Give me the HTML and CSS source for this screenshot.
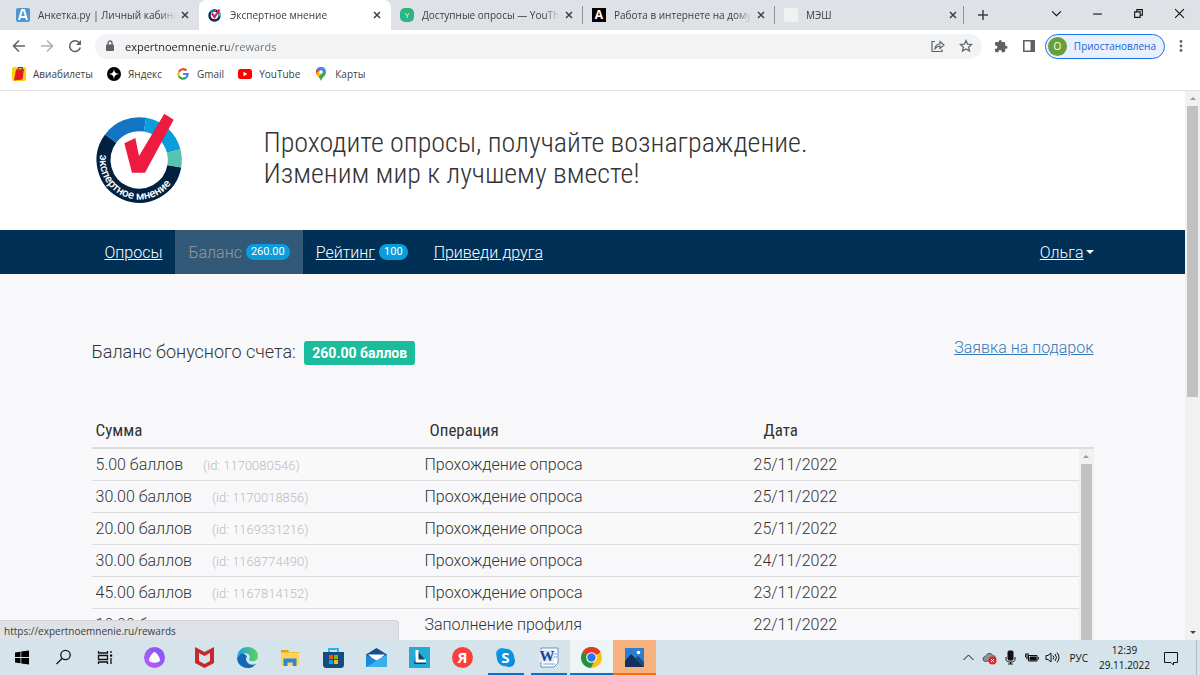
FILE: index.html
```html
<!DOCTYPE html>
<html lang="ru">

<head>
    <meta charset="UTF-8">
    <meta name="viewport" content="width=device-width, initial-scale=1.0">
    <title>Экспертное мнение</title>
    <link rel="stylesheet" href="styles.css">
</head>

<body>

    <!-- tabs -->
    <div class="tabstrip">
        <div class="tab">
            <svg class="favicon" viewBox="0 0 14 14"><rect width="14" height="14" rx="2" fill="#4f97d3"/><path d="M3 12 6 2h2l3 10M4.500 9h5" fill="none" stroke="#fff" stroke-width="2"/></svg>
            <span class="tab-title">Анкетка.ру | Личный кабинет</span>
            <button class="tab-close" aria-label="Закрыть"><svg viewBox="0 0 10 10"><path d="M2 2l6 6M8 2L2 8"/></svg></button>
        </div>
        <div class="tab active">
            <svg class="favicon" viewBox="0 0 14 14"><circle cx="6.500" cy="7.500" r="5" fill="none" stroke="#0c2a4d" stroke-width="2.400"/><path d="M2.500 4.500A5 5 0 0 1 8 2.700" fill="none" stroke="#1a78c2" stroke-width="2.400"/><path d="M11 5a5 5 0 0 1 .500 3.500" fill="none" stroke="#37b9d6" stroke-width="2.400"/><path d="M4 5.500 6.500 9 11.500 1.500" fill="none" stroke="#ed1b40" stroke-width="2.200"/></svg>
            <span class="tab-title">Экспертное мнение</span>
            <button class="tab-close" aria-label="Закрыть"><svg viewBox="0 0 10 10"><path d="M2 2l6 6M8 2L2 8"/></svg></button>
        </div>
        <div class="tab">
            <span class="favicon letter green">Y</span>
            <span class="tab-title">Доступные опросы — YouThink</span>
            <button class="tab-close" aria-label="Закрыть"><svg viewBox="0 0 10 10"><path d="M2 2l6 6M8 2L2 8"/></svg></button>
        </div>
        <div class="tab divided">
            <span class="favicon letter black">A</span>
            <span class="tab-title">Работа в интернете на дому</span>
            <button class="tab-close" aria-label="Закрыть"><svg viewBox="0 0 10 10"><path d="M2 2l6 6M8 2L2 8"/></svg></button>
        </div>
        <div class="tab divided last">
            <span class="favicon blank"></span>
            <span class="tab-title">МЭШ</span>
            <button class="tab-close" aria-label="Закрыть"><svg viewBox="0 0 10 10"><path d="M2 2l6 6M8 2L2 8"/></svg></button>
        </div>
        <button class="new-tab" aria-label="Новая вкладка"><svg viewBox="0 0 12 12"><path d="M6 1v10M1 6h10"/></svg></button>
        <div class="window-buttons">
            <button aria-label="Поиск вкладок"><svg viewBox="0 0 10 10"><path d="M1 3l4 4 4-4"/></svg></button>
            <button aria-label="Свернуть"><svg viewBox="0 0 10 10"><path d="M1 5.500h8"/></svg></button>
            <button aria-label="Окно"><svg viewBox="0 0 10 10"><path d="M1.500 3.500h5v5h-5zM3.500 3V1.500h5v5H7"/></svg></button>
            <button aria-label="Закрыть окно"><svg viewBox="0 0 10 10"><path d="M1 1l8 8M9 1L1 9"/></svg></button>
        </div>
    </div>

    <!-- address bar -->
    <div class="toolbar">
        <button class="tool" aria-label="Назад"><svg viewBox="0 0 14 14"><path d="M13 7H2M7 1.500 1.500 7 7 12.500"/></svg></button>
        <button class="tool muted" aria-label="Вперёд"><svg viewBox="0 0 14 14"><path d="M1 7h11M7 1.500 12.500 7 7 12.500"/></svg></button>
        <button class="tool" aria-label="Обновить"><svg viewBox="0 0 14 14"><path d="M11.500 4A5.400 5.400 0 1 0 12.300 8.500"/><path d="M13 1v5H8z" class="solid"/></svg></button>
        <div class="omnibox">
            <svg class="lock" viewBox="0 0 10 12"><rect x="1" y="4.500" width="8" height="6.500" rx="1" fill="#5f6368"/><path d="M3 5V3a2 2 0 0 1 4 0v2" fill="none" stroke="#5f6368" stroke-width="1.300"/></svg>
            <input class="url" type="text" value="expertnoemnenie.ru/rewards" aria-label="Адрес">
            <button aria-label="Поделиться"><svg viewBox="0 0 14 14"><path d="M4 2.500H1v10h10V10.500M4 9.500c.500-3 2.300-4.500 5-4.500V2.500L13 6 9 9.500V7.200C6.800 7.200 5.300 8 4 9.500z"/></svg></button>
            <button aria-label="Закладка"><svg viewBox="0 0 14 14"><path d="M7 1.500l1.600 3.700 4 .300-3 2.700.900 3.900L7 10l-3.500 2.100.900-3.900-3-2.700 4-.300z"/></svg></button>
        </div>
        <button class="tool" aria-label="Расширения"><svg viewBox="0 0 14 14"><path class="solid" d="M12 6.800h-.800V4.300c0-.700-.500-1.200-1.200-1.200H7.700v-.700a1.500 1.500 0 0 0-3 0v.700H2.200C1.500 3.100 1 3.600 1 4.300v2.300h.800a1.600 1.600 0 0 1 0 3.200H1v2.300c0 .700.500 1.200 1.200 1.200h2.300v-.800a1.600 1.600 0 0 1 3.200 0v.800H10c.700 0 1.200-.500 1.200-1.200V9.800h.800a1.500 1.500 0 0 0 0-3z"/></svg></button>
        <button class="tool" aria-label="Боковая панель"><svg viewBox="0 0 14 14"><path d="M1.800 1.800h10.400v10.400H1.800z"/><path class="solid" d="M8.500 2H12v10H8.500z"/></svg></button>
        <button class="profile"><span class="avatar">O</span>Приостановлена</button>
        <button class="tool" aria-label="Меню"><svg viewBox="0 0 14 14"><g class="solid"><circle cx="7" cy="2.500" r="1.400"/><circle cx="7" cy="7" r="1.400"/><circle cx="7" cy="11.500" r="1.400"/></g></svg></button>
    </div>

    <!-- bookmarks -->
    <div class="bookmarks">
        <a href="#"><svg viewBox="0 0 14 14"><rect width="14" height="14" rx="2" fill="#fdd20a"/><path d="M4 2.500 12 2l-1.500 10.500L2 13.500z" fill="#e31b23"/><path d="M6 2.500 6.500.500h4L10 2.200" fill="none" stroke="#45361a"/></svg>Авиабилеты</a>
        <a href="#"><svg viewBox="0 0 14 14"><circle cx="7" cy="7" r="7" fill="#000"/><path d="M7 1.500C7.400 5.500 8.500 6.600 12.500 7 8.500 7.400 7.400 8.500 7 12.500 6.600 8.500 5.500 7.400 1.500 7 5.500 6.600 6.600 5.500 7 1.500z" fill="#fff"/></svg>Яндекс</a>
        <a href="#"><svg viewBox="0 0 14 14"><g fill="none" stroke-width="2.200"><path d="M10.500 3.600A4.700 4.700 0 0 0 2.900 4.800" stroke="#ea4335"/><path d="M2.900 4.800a4.700 4.700 0 0 0 0 4.400" stroke="#fbbc05"/><path d="M2.900 9.200a4.700 4.700 0 0 0 7.100 1.400" stroke="#34a853"/><path d="M10 10.600A4.700 4.700 0 0 0 11.700 7H7" stroke="#4285f4"/></g></svg>Gmail</a>
        <a href="#"><svg viewBox="0 0 14 14"><rect y="2" width="14" height="10" rx="2.500" fill="#f00"/><path d="M5.500 4.800v4.400L9.300 7z" fill="#fff"/></svg>YouTube</a>
        <a href="#"><svg viewBox="0 0 14 14"><path d="M7 14C6 10.500 2 8.500 2 5a5 5 0 0 1 10 0C12 8.500 8 10.500 7 14z" fill="#34a853"/><path d="M2 5a5 5 0 0 1 1.300-3.400L6 4 3 8A6 6 0 0 1 2 5z" fill="#ea4335"/><path d="M2.200 6.500 6 3l3 3-5 4.200z" fill="#fbbc04"/><path d="M3.300 1.600A5 5 0 0 1 11.600 3L8 7 5 4z" fill="#4285f4"/><circle cx="7" cy="5" r="1.800" fill="#fff"/></svg>Карты</a>
    </div>

    <!-- site -->
    <div class="viewport">
        <div class="site">
            <header>
                <div class="container brand">
                    <svg class="logo" viewBox="0 0 300 315" role="img" aria-label="Экспертное мнение">
                        <g fill="none" stroke-width="42">
                            <path d="M253 181A107 107 0 1 1 62 98" stroke="#02203f"/>
                            <path d="M62 98A107 107 0 0 1 165 56" stroke="#1376c4"/>
                            <path d="M165 56A107 107 0 0 1 251 135" stroke="#099ddc"/>
                            <path d="M251 135A107 107 0 0 1 253 181" stroke="#59c3b2"/>
                        </g>
                        <path d="M103 112l33-16 11 54 76-127 28 18-86 159h-39z" fill="#ed1b40"/>
                        <path id="ring" d="M30 146A119 119 0 0 0 258 207" fill="none"/>
                        <text class="logo-text"><textPath href="#ring">экспертное мнение</textPath></text>
                    </svg>
                    <h1>Проходите опросы, получайте вознаграждение.<br>Изменим мир к лучшему вместе!</h1>
                </div>
            </header>

            <nav>
                <div class="container menu">
                    <a href="#"><span>Опросы</span></a>
                    <a href="#" class="current"><span>Баланс</span><b class="badge">260.00</b></a>
                    <a href="#"><span>Рейтинг</span><b class="badge">100</b></a>
                    <a href="#"><span>Приведи друга</span></a>
                    <a href="#" class="user"><span>Ольга</span><i class="caret"></i></a>
                </div>
            </nav>

            <main class="container">
                <div class="balance">
                    <p>Баланс бонусного счета: <b class="total">260.00 баллов</b></p>
                    <a href="#">Заявка на подарок</a>
                </div>

                <div class="history">
                    <table>
                        <thead>
                            <tr><th>Сумма</th><th>Операция</th><th>Дата</th></tr>
                        </thead>
                        <tbody>
                            <tr><td>5.00 баллов <small>(id: 1170080546)</small></td><td>Прохождение опроса</td><td>25/11/2022</td></tr>
                            <tr><td>30.00 баллов <small>(id: 1170018856)</small></td><td>Прохождение опроса</td><td>25/11/2022</td></tr>
                            <tr><td>20.00 баллов <small>(id: 1169331216)</small></td><td>Прохождение опроса</td><td>25/11/2022</td></tr>
                            <tr><td>30.00 баллов <small>(id: 1168774490)</small></td><td>Прохождение опроса</td><td>24/11/2022</td></tr>
                            <tr><td>45.00 баллов <small>(id: 1167814152)</small></td><td>Прохождение опроса</td><td>23/11/2022</td></tr>
                            <tr><td>10.00 баллов <small>(id: 1167814098)</small></td><td>Заполнение профиля</td><td>22/11/2022</td></tr>
                        </tbody>
                    </table>
                    <div class="scrollbar inner"><i class="up"></i><div class="thumb"></div></div>
                </div>
            </main>
        </div>
        <div class="scrollbar outer"><i class="up"></i><div class="thumb"></div><i class="down"></i></div>
        <div class="status">https://expertnoemnenie.ru/rewards</div>
    </div>

    <!-- windows taskbar -->
    <footer class="taskbar">
        <button class="sys" aria-label="Пуск"><svg viewBox="0 0 21 21"><path d="M4 5.500l5.500-.800V10H4zM10.300 4.600 18 3.500V10h-7.700zM4 11h5.500v5.300L4 15.500zM10.300 11H18v6.500l-7.700-1.100z"/></svg></button>
        <button class="sys" aria-label="Поиск"><svg viewBox="0 0 21 21"><g fill="none" stroke="#111" stroke-width="1.300"><circle cx="12.500" cy="8" r="4.700"/><path d="M9 11.500 3.500 17"/></g></svg></button>
        <button class="sys" aria-label="Задачи"><svg viewBox="0 0 21 21"><path fill="none" stroke="#111" stroke-width="1.300" d="M3.500 4v2h9V4M3.500 17v-2h9v2M3.500 8.500h9v4h-9zM16 4v2M16 11v6"/><path d="M15 7.500h2.200v2.200H15z"/></svg></button>
        <button class="alice" aria-label="Алиса"><svg viewBox="0 0 21 21"><defs><linearGradient id="al" x1="1" y1="0" x2="0" y2="1"><stop offset="0" stop-color="#7857f5"/><stop offset="1" stop-color="#c05bfa"/></linearGradient></defs><circle cx="10.500" cy="10.500" r="10.500" fill="url(#al)"/><path d="M10.500 5C12.500 5 16 11 16 13c0 1.800-2.500 2.800-5.500 2.800S5 14.800 5 13c0-2 3.500-8 5.500-8z" fill="#fff"/></svg></button>
        <button aria-label="McAfee"><svg viewBox="0 0 21 21"><path d="M1 0l9.500 5L20 0v16l-9.500 5L1 16z" fill="#c7282d"/><path d="M5 6l5.500 3L16 6v8l-5.500 3L5 14z" fill="#d5e4e9"/></svg></button>
        <button aria-label="Edge"><svg viewBox="0 0 21 21"><defs><linearGradient id="ed"><stop offset="0" stop-color="#1b9de2"/><stop offset="1" stop-color="#5fd35a"/></linearGradient></defs><path d="M0 10.500a10.500 10.500 0 0 0 19 6.200c-3 1.500-6 1.200-8-.700-2.200-2-2.600-4.600-1-6.800L5 5z" fill="#1267b8"/><path d="M0 10.500C.500 4 5 0 10.500 0 17 0 21 4.500 21 9c0 3.500-2.500 5.300-5.300 5.300-2.400 0-3.700-.900-3.700-1.800 0-.700.900-1 .900-2.500C12.900 8 10.700 6.300 8 6.300 4.500 6.300 1 8 0 10.500z" fill="url(#ed)"/></svg></button>
        <button aria-label="Проводник"><svg viewBox="0 0 21 21"><path d="M1 3h7l1.500 2H19v4H1z" fill="#e5a50a"/><path d="M1 5.500h18V18H1z" fill="#ffd35c"/><path d="M3.500 19v-7.500h13V19h-3.800v-3.500H7.500V19z" fill="#2f86d2"/></svg></button>
        <button aria-label="Store"><svg viewBox="0 0 21 21"><path d="M6 6V2h9v4" fill="none" stroke="#25b5ea" stroke-width="1.800"/><path d="M0 5h21v12.500c0 2-1 3.500-3 3.500H3c-2 0-3-1.500-3-3.500z" fill="#164b80"/><path d="M6 8h4v4H6z" fill="#f25022"/><path d="M11 8h4v4h-4z" fill="#7fba00"/><path d="M6 13h4v4H6z" fill="#00a4ef"/><path d="M11 13h4v4h-4z" fill="#ffb900"/></svg></button>
        <button aria-label="Почта"><svg viewBox="0 0 21 21"><path d="M0 7.500 10.500 1 21 7.500V10H0z" fill="#15508f"/><path d="M2 7.500h17l-8.500 7z" fill="#fff"/><path d="M0 7.500l10.500 6L21 7.500V20H0z" fill="#1788da"/><path d="M0 20 21 7.500V20z" fill="#38b0ee"/></svg></button>
        <button aria-label="L"><svg viewBox="0 0 21 21"><path d="M0 0h21v21H0z" fill="#25a9d6"/><path d="M8 3 5 17h12v-3z" fill="#0f4560"/><path d="M8 3v11h9" fill="none" stroke="#fff" stroke-width="3"/></svg></button>
        <button aria-label="Яндекс"><span class="round">Я</span></button>
        <button class="running" aria-label="Skype"><svg viewBox="0 0 21 21"><circle cx="7" cy="7" r="6" fill="#0aa5ea"/><circle cx="14" cy="14" r="6" fill="#0783d8"/><circle cx="10.500" cy="10.500" r="8.800" fill="#0b93e0"/><text x="10.500" y="15.500" text-anchor="middle" class="glyph">S</text></svg></button>
        <button class="running" aria-label="Word"><svg viewBox="0 0 21 21"><path d="M3 1h17v15l-4 4H3z" fill="#fff" stroke="#6e8fc4"/><path d="M13 7h6M13 10h6M5 17h12" stroke="#7c9bd0"/><path d="M1 3h15v12H1z" fill="#dfe9f8"/><text x="9" y="14" text-anchor="middle" class="glyph word">W</text></svg></button>
        <button class="running front" aria-label="Chrome"><svg viewBox="0 0 21 21"><circle cx="10.500" cy="10.500" r="10.500" fill="#fbc116"/><path d="M10.500 10.500 1.400 5.200a10.500 10.500 0 0 1 18.200 0z" fill="#e33b2e"/><path d="M1.400 5.200a10.500 10.500 0 0 0 8.300 15.800l4.500-8-3.700-2.500z" fill="#229342"/><circle cx="10.500" cy="10.500" r="5.300" fill="#fff"/><circle cx="10.500" cy="10.500" r="4.200" fill="#2a78ec"/></svg></button>
        <button class="running alert" aria-label="Фотографии"><svg viewBox="0 0 21 21"><path d="M1 1h19v19H1z" fill="#2a7fd0"/><path d="M1 14 7 7l13 13H1z" fill="#15305f"/><path d="M11 11.500l3-2.500 6 6v5z" fill="#1b4c8c"/><circle cx="14.500" cy="5.500" r="1.800" fill="#fff"/></svg></button>

        <div class="tray">
            <svg viewBox="0 0 15 15"><path d="M2.500 10 7.500 5l5 5"/></svg>
            <svg viewBox="0 0 15 15"><path d="M3.500 11.500a2.500 2.500 0 0 1 0-5C4.500 3 9 2.500 11 5.500c2 0 3 2 2.500 4z" fill="#8f9496" stroke="#555"/><circle cx="10.500" cy="10.500" r="4" fill="#e3242b" stroke="none"/><path d="M9 9l3 3M12 9l-3 3" stroke="#fff"/></svg>
            <svg viewBox="0 0 15 15"><rect x="5" y="1" width="5" height="9" rx="1" fill="#111"/><path d="M3 7v2.500c0 1.500 1.500 2.500 4.500 2.500S12 11 12 9.500V7M7.500 12v2M5 14h5"/></svg>
            <svg viewBox="0 0 15 15"><path d="M4.500 5.500H13v5.500H4.500zM14.300 7v2.500M2 3v2M4 3v2M1.500 5h3v2h-3zM3 7v2.500"/><path d="M6 7h6v3H6z" fill="#111"/></svg>
            <svg viewBox="0 0 15 15"><path d="M1 5.500h2L6 3v9L3 9.500H1zM8 5.500q1.500 2 0 4M10 4q3 3.500 0 7M12 2.500q4 5 0 10"/></svg>
            <span class="lang">РУС</span>
            <div class="clock">12:39<br>29.11.2022</div>
            <svg class="notes" viewBox="0 0 16 16"><path d="M1.500 2.500h13v10h-4v2.500L8 12.500H1.500z"/></svg>
        </div>
    </footer>

</body>

</html>
```
FILE: styles.css
```css
* {
    box-sizing: border-box;
}

body,
html {
    margin: 0;
    padding: 0;
}

body {
    display: flex;
    flex-direction: column;
    height: 100vh;
    overflow: hidden;
    font-family: "Open Sans", "Noto Sans", sans-serif;
    font-size: 10px;
    color: #3c4043;
}

button {
    display: flex;
    align-items: center;
    justify-content: center;
    flex: none;
    border: 0;
    padding: 0;
    background-color: transparent;
    font: inherit;
    color: inherit;
}

svg {
    display: block;
    flex: none;
}

/* tabs */
.tabstrip {
    display: flex;
    flex: none;
    height: 30px;
    padding-left: 7px;
    background-color: #dee1e6;
}

.tab {
    display: flex;
    align-items: center;
    width: 192px;
    padding: 0 9px;
}

.tab.active {
    background-color: white;
    border-radius: 7px 7px 0 0;
}

.tab.divided {
    position: relative;
}

.tab.divided::before,
.tab.last::after {
    content: "";
    position: absolute;
    left: -1px;
    top: 6px;
    width: 1px;
    height: 18px;
    background-color: #8f9398;
}

.tab.last::after {
    left: auto;
    right: 3px;
}

.favicon {
    flex: none;
    width: 14px;
    height: 14px;
    margin-right: 8px;
}

.letter {
    text-align: center;
    line-height: 14px;
    color: white;
}

.letter.green {
    border-radius: 5px;
    background-color: #2bb583;
    font-size: 8px;
}

.letter.black {
    background-color: black;
    font-size: 12px;
    font-weight: bold;
}

.blank {
    background-color: #f1f1f1;
}

.tab-title {
    flex: 1;
    overflow: hidden;
    white-space: nowrap;
    margin-right: 4px;
    -webkit-mask-image: linear-gradient(to right, black 88%, transparent);
    mask-image: linear-gradient(to right, black 88%, transparent);
}

.tab-close svg {
    width: 10px;
    height: 10px;
    stroke: #3c4043;
    stroke-width: 1.5;
}

.new-tab {
    width: 32px;
}

.new-tab svg {
    width: 12px;
    height: 12px;
    stroke: #3c4043;
    stroke-width: 1.5;
}

.window-buttons {
    display: flex;
    height: 26px;
    margin-left: auto;
}

.window-buttons button {
    width: 41px;
}

.window-buttons svg {
    width: 11px;
    height: 11px;
    fill: none;
    stroke: #111;
}

/* address bar */
.toolbar {
    display: flex;
    align-items: center;
    flex: none;
    height: 32px;
    padding: 0 5px;
}

.tool {
    width: 28px;
    height: 28px;
}

.tool svg {
    width: 14px;
    height: 14px;
    fill: none;
    stroke: #5f6368;
    stroke-width: 1.6;
}

.tool .solid {
    fill: #5f6368;
    stroke: none;
}

.tool.muted {
    opacity: 0.5;
}

.omnibox {
    display: flex;
    align-items: center;
    flex: 1;
    height: 25px;
    margin: 0 5px 0 6px;
    padding: 0 2px 0 10px;
    border-radius: 13px;
    background-color: #f1f3f4;
}

.lock {
    width: 10px;
    height: 12px;
    margin-right: 10px;
}

/* host is dark, path is grey */
.url {
    flex: 1;
    min-width: 0;
    border: 0;
    padding: 0;
    outline: 0;
    font: 11px "Open Sans", "Noto Sans", sans-serif;
    color: transparent;
    background: linear-gradient(to right, #202124 104px, #6b7075 104px);
    -webkit-background-clip: text;
    background-clip: text;
}

.omnibox button {
    width: 28px;
}

.omnibox button svg {
    width: 14px;
    height: 14px;
    fill: none;
    stroke: #5f6368;
    stroke-width: 1.2;
}

.profile {
    height: 25px;
    margin: 0 2px;
    padding: 0 8px 0 2px;
    border: 1px solid #1a73e8;
    border-radius: 13px;
    background-color: #e8f0fe;
    color: #1967d2;
}

.avatar {
    width: 19px;
    height: 19px;
    margin-right: 7px;
    border-radius: 50%;
    background-color: #689f38;
    line-height: 19px;
    color: white;
}

/* bookmarks */
.bookmarks {
    display: flex;
    align-items: center;
    flex: none;
    gap: 14px;
    height: 29px;
    padding: 0 12px 5px;
    border-bottom: 1px solid #e4e4e4;
}

.bookmarks a {
    display: flex;
    align-items: center;
    gap: 7px;
    color: #3c4043;
    text-decoration: none;
}

.bookmarks svg {
    width: 14px;
    height: 14px;
}

/* site */
.viewport {
    position: relative;
    display: flex;
    flex: 1;
    min-height: 0;
    overflow: hidden;
}

.site {
    flex: 1;
    overflow: hidden;
    background-color: #f8f8fb;
    font-family: Roboto, sans-serif;
    font-size: 16px;
    font-weight: 300;
    color: #333;
}

.container {
    max-width: 1002px;
    margin: 0 auto;
}

header {
    background-color: white;
}

.brand {
    display: flex;
    align-items: center;
    height: 139px;
    padding-bottom: 5px;
}

.logo {
    width: 100px;
    height: 105px;
    margin-left: -2px;
    margin-right: 74px;
}

.logo-text {
    font-family: Roboto, sans-serif;
    font-size: 34px;
    font-weight: 500;
    fill: white;
}

h1 {
    margin: 0;
    font-family: "Roboto Condensed", Roboto, sans-serif;
    font-size: 28px;
    font-weight: 300;
    line-height: 31px;
}

nav {
    background-color: #003056;
}

.menu {
    display: flex;
    height: 44px;
}

.menu a {
    display: flex;
    align-items: center;
    gap: 4px;
    padding: 0 13px;
    color: white;
    text-decoration: none;
}

.menu span {
    text-decoration: underline;
}

.menu .current {
    background-color: #335978;
    color: #999;
}

.menu .current span {
    text-decoration: none;
}

.badge {
    height: 16px;
    padding: 0 5px;
    border-radius: 8px;
    background-color: #099ddc;
    font-size: 11px;
    font-weight: 400;
    line-height: 16px;
    color: white;
}

.menu .user {
    gap: 2px;
    margin-left: auto;
    padding-right: 0;
}

.caret {
    border: 4px solid transparent;
    border-top-color: white;
    border-bottom: 0;
}

main {
    padding-top: 64px;
}

.balance {
    display: flex;
    justify-content: space-between;
    height: 75px;
}

.balance p {
    margin: 0;
    font-size: 18px;
    line-height: 27px;
}

.balance a {
    line-height: 20px;
    color: #337ab7;
}

.total {
    display: inline-block;
    margin-left: 4px;
    padding: 0 8px;
    border-radius: 3px;
    background-color: #1abc9c;
    font-size: 14px;
    font-weight: 700;
    line-height: 24px;
    color: white;
}

.history {
    position: relative;
}

table {
    display: block;
}

thead,
tbody {
    display: block;
}

tr {
    display: table;
    table-layout: fixed;
    width: 100%;
    border-spacing: 0;
}

thead {
    border-bottom: 2px solid #ddd;
}

th {
    height: 34px;
    padding: 0 4px;
    font-family: "Roboto Condensed", Roboto, sans-serif;
    font-size: 17px;
    font-weight: 400;
    text-align: left;
}

tbody {
    margin-right: 15px;
}

td {
    height: 32px;
    padding: 0 4px;
    border-bottom: 1px solid #ddd;
    white-space: nowrap;
}

tbody tr:nth-child(odd) {
    background-color: #f9f9f9;
}

small {
    margin-left: 16px;
    font-size: 13px;
    color: #bbb;
}

/* scrollbars */
.scrollbar {
    display: flex;
    flex-direction: column;
    align-items: center;
    background-color: #f1f1f1;
}

.scrollbar i {
    margin: 6px 0;
    border: 3px solid transparent;
}

.scrollbar .up {
    border-bottom-color: #999;
    border-top: 0;
}

.scrollbar .down {
    margin-top: auto;
    border-top-color: #444;
    border-bottom: 0;
}

.thumb {
    width: 11px;
    background-color: #c1c1c1;
}

.outer {
    width: 15px;
    flex: none;
}

.outer .thumb {
    height: 53%;
}

.inner {
    position: absolute;
    top: 36px;
    right: 0;
    bottom: 0;
    width: 15px;
}

.inner .thumb {
    flex: 1;
}

.status {
    position: absolute;
    left: 0;
    bottom: 0;
    width: 399px;
    height: 20px;
    padding-left: 4px;
    border-top: 1px solid #d2d4d8;
    border-right: 1px solid #d2d4d8;
    border-top-right-radius: 4px;
    background-color: #dee1e6;
    line-height: 20px;
}

/* taskbar */
.taskbar {
    display: flex;
    flex: none;
    height: 35px;
    background-color: #d4e4ea;
    color: #111;
}

.taskbar button {
    width: 43px;
}

.taskbar .sys {
    width: 42px;
}

.taskbar .alice {
    width: 57px;
}

.taskbar button svg,
.round {
    width: 21px;
    height: 21px;
}

.round {
    border-radius: 50%;
    background: #fc3f3d;
    font-size: 15px;
    font-weight: bold;
    line-height: 20px;
    color: white;
}

.glyph {
    font-size: 15px;
    font-weight: bold;
    fill: white;
}

.word {
    font-family: "Liberation Serif", serif;
    fill: #1c448e;
}

.running {
    background: linear-gradient(#0a74cc, #0a74cc) bottom / 36px 2px no-repeat;
}

.running.front {
    background: #ecf4f6 linear-gradient(#0a74cc, #0a74cc) bottom / 100% 2px no-repeat;
}

.running.alert {
    background: #f6b27d linear-gradient(#fb6d0b, #fb6d0b) bottom / 100% 2px no-repeat;
}

.tray {
    display: flex;
    align-items: center;
    gap: 6px;
    margin-left: auto;
    margin-right: 3px;
    padding-right: 17px;
    border-right: 1px solid #a9bcc5;
}

.tray svg {
    width: 15px;
    height: 15px;
    fill: none;
    stroke: #111;
}

.lang {
    margin: 0 5px 0 4px;
}

.clock {
    line-height: 15px;
    text-align: center;
}

.tray .notes {
    width: 16px;
    height: 16px;
    margin-left: 7px;
}
```
